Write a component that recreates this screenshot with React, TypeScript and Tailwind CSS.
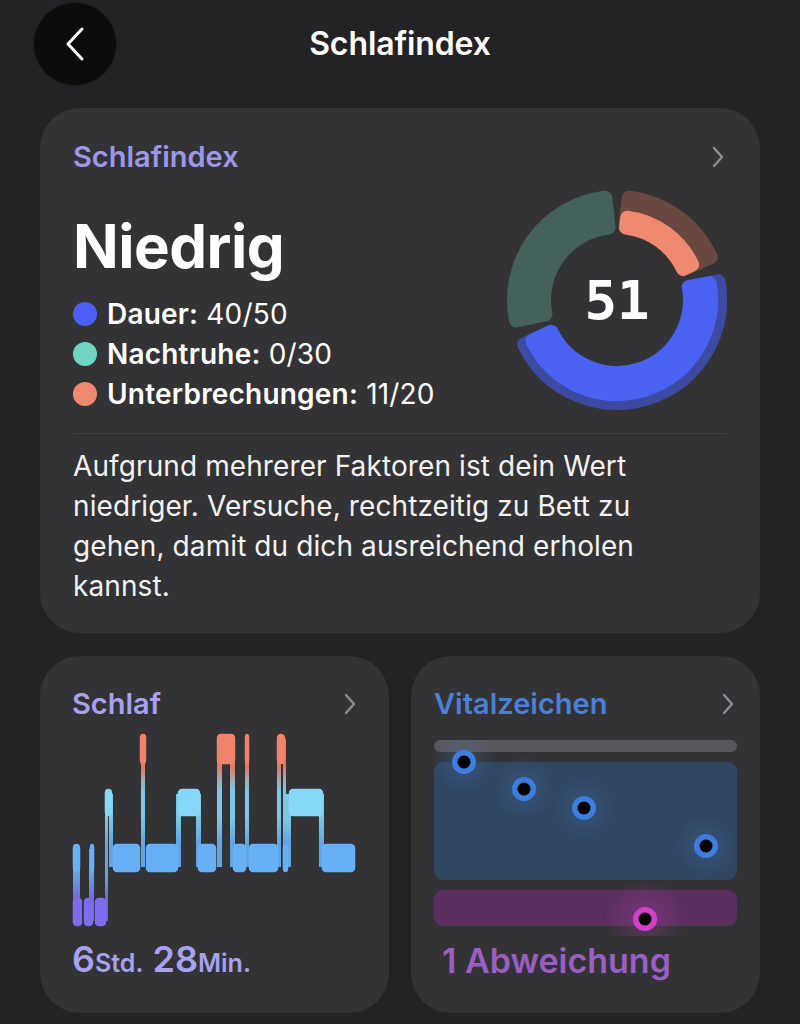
import React from "react";

const CARD = "#333336";

function pt(cx: number, cy: number, r: number, a: number) {
  const t = (a * Math.PI) / 180;
  return [cx + r * Math.sin(t), cy - r * Math.cos(t)];
}

function sector(cx: number, cy: number, r1: number, r2: number, a1: number, a2: number, k: number) {
  const rm = (r1 + r2) / 2;
  const da = ((k / rm) * 180) / Math.PI;
  const b1 = a1 + da;
  const b2 = a2 - da;
  const q1 = r1 + k;
  const q2 = r2 - k;
  const large = b2 - b1 > 180 ? 1 : 0;
  const [x1, y1] = pt(cx, cy, q2, b1);
  const [x2, y2] = pt(cx, cy, q2, b2);
  const [x3, y3] = pt(cx, cy, q1, b2);
  const [x4, y4] = pt(cx, cy, q1, b1);
  return `M${x1} ${y1} A${q2} ${q2} 0 ${large} 1 ${x2} ${y2} L${x3} ${y3} A${q1} ${q1} 0 ${large} 0 ${x4} ${y4} Z`;
}

function Arc({ d, color }: { d: string; color: string }) {
  return <path d={d} fill={color} stroke={color} strokeWidth={14} strokeLinejoin="round" />;
}

function Ring() {
  const c = 112;
  return (
    <svg width="224" height="224" viewBox="0 0 224 224">
      <Arc d={sector(c, c, 66, 110, 254, 358, 7)} color="#45615b" />
      <Arc d={sector(c, c, 66, 110, 2, 70, 7)} color="#6a4740" />
      <Arc d={sector(c, c, 66, 90, 2, 70, 7)} color="#ef8a71" />
      <Arc d={sector(c, c, 66, 110, 75, 249, 7)} color="#3c4aa2" />
      <Arc d={sector(c, c, 66, 101, 75, 249, 7)} color="#4a62f1" />
      <text
        x="112"
        y="131"
        textAnchor="middle"
        fill="#ffffff"
        fontFamily="'DejaVu Sans Mono', monospace"
        fontWeight="700"
        fontSize="54"
      >
        51
      </text>
    </svg>
  );
}

function Chevron({ className = "" }: { className?: string }) {
  return (
    <svg width="14" height="22" viewBox="0 0 14 22" className={className}>
      <path d="M3 2 L11 11 L3 20" fill="none" stroke="#8d8d92" strokeWidth="2.4" strokeLinecap="round" strokeLinejoin="round" />
    </svg>
  );
}

const LEVELS: Record<string, [number, number]> = {
  awake: [0, 32],
  rem: [55, 84],
  core: [110, 140],
  deep: [164, 194],
};

const SEGS: [string, number, number][] = [
  ["core", 0, 9],
  ["deep", 0, 11],
  ["deep", 11, 22],
  ["deep", 22, 35],
  ["core", 17, 23],
  ["rem", 32, 41],
  ["core", 40, 69],
  ["awake", 67, 75],
  ["core", 73, 107],
  ["rem", 105, 129],
  ["core", 125, 145],
  ["awake", 144, 164],
  ["core", 160, 175],
  ["awake", 172, 178],
  ["core", 176, 207],
  ["awake", 204, 214],
  ["core", 210, 217],
  ["rem", 216, 252],
  ["core", 249, 284],
];

const COLS: [number, number, string, string][] = [
  [1, 8, "core", "deep"],
  [17, 22, "core", "deep"],
  [33, 36, "rem", "deep"],
  [37, 41, "rem", "core"],
  [69, 73, "awake", "core"],
  [104, 109, "rem", "core"],
  [124, 129, "rem", "core"],
  [145, 150, "awake", "core"],
  [158, 163, "awake", "core"],
  [173, 177, "awake", "core"],
  [205, 209, "awake", "core"],
  [211, 214, "awake", "core"],
  [214, 219, "rem", "core"],
  [247, 252, "rem", "core"],
];

function Hypnogram() {
  return (
    <svg width="284" height="196" viewBox="0 0 284 196">
      <defs>
        <linearGradient id="hg" gradientUnits="userSpaceOnUse" x1="0" y1="0" x2="0" y2="196">
          <stop offset="0" stopColor="#f1826b" />
          <stop offset="0.17" stopColor="#f1826b" />
          <stop offset="0.29" stopColor="#86d8f8" />
          <stop offset="0.43" stopColor="#86d8f8" />
          <stop offset="0.565" stopColor="#68b0f5" />
          <stop offset="0.72" stopColor="#68b0f5" />
          <stop offset="0.85" stopColor="#7b6cf0" />
          <stop offset="1" stopColor="#7b6cf0" />
        </linearGradient>
      </defs>
      {SEGS.map(([lv, a, b], i) => {
        const [t, bt] = LEVELS[lv];
        return (
          <rect
            key={"s" + i}
            x={a}
            y={t}
            width={b - a}
            height={bt - t}
            rx={5}
            fill="url(#hg)"
            stroke={CARD}
            strokeWidth={1.5}
          />
        );
      })}
      {COLS.map(([a, b, up, lo], i) => {
        const top = LEVELS[up][0] + 6;
        const bot = LEVELS[lo][1] - 6;
        return <rect key={"c" + i} x={a} y={top} width={b - a} height={bot - top} fill="url(#hg)" opacity={0.9} />;
      })}
    </svg>
  );
}

function Dot({ x, y, color }: { x: number; y: number; color: string }) {
  return (
    <g>
      <circle cx={x} cy={y} r={12} fill={color} />
      <circle cx={x} cy={y} r={6.5} fill="#000000" />
    </g>
  );
}

function Vitals() {
  return (
    <svg width="303" height="196" viewBox="0 0 303 196">
      <defs>
        <radialGradient id="gb" cx="0.5" cy="0.5" r="0.5">
          <stop offset="0" stopColor="#4d7fd0" stopOpacity="0.25" />
          <stop offset="1" stopColor="#4d7fd0" stopOpacity="0" />
        </radialGradient>
        <radialGradient id="gp" cx="0.5" cy="0.5" r="0.5">
          <stop offset="0" stopColor="#c040b8" stopOpacity="0.3" />
          <stop offset="1" stopColor="#c040b8" stopOpacity="0" />
        </radialGradient>
      </defs>
      <rect x="0" y="0" width="303" height="12" rx="6" fill="#58585c" />
      <rect x="0" y="22" width="303" height="118" rx="9" fill="#2f4560" />
      <rect x="0" y="150" width="303" height="36" rx="9" fill="#5a2f5f" />
      <circle cx="30" cy="22" r="34" fill="url(#gb)" />
      <circle cx="90" cy="49" r="34" fill="url(#gb)" />
      <circle cx="150" cy="68" r="34" fill="url(#gb)" />
      <circle cx="272" cy="106" r="34" fill="url(#gb)" />
      <circle cx="211" cy="179" r="40" fill="url(#gp)" />
      <Dot x={30} y={22} color="#3d7ddf" />
      <Dot x={90} y={49} color="#3d7ddf" />
      <Dot x={150} y={68} color="#3d7ddf" />
      <Dot x={272} y={106} color="#3d7ddf" />
      <Dot x={211} y={179} color="#d140c6" />
    </svg>
  );
}

function LegendRow({ color, label, value }: { color: string; label: string; value: string }) {
  return (
    <div className="flex items-center gap-[10px] h-[40px]">
      <span className="w-[24px] h-[24px] rounded-full shrink-0" style={{ backgroundColor: color }} />
      <span className="text-[28px] text-white leading-[40px] tracking-[0.2px]">
        <span className="font-semibold">{label}</span> {value}
      </span>
    </div>
  );
}

export default function App() {
  return (
    <div className="w-[800px] h-[1024px] overflow-hidden bg-[#232325] font-['Inter','Noto_Sans',sans-serif] text-white">
      {/* Header */}
      <div className="relative h-[86px] pt-[2px] px-[33px]">
        <div className="w-[84px] h-[84px] rounded-full bg-[#0c0c0d] border border-[#1c1c1e] flex items-center justify-center">
          <svg width="24" height="36" viewBox="0 0 24 36">
            <path d="M19 3 L5 18 L19 33" fill="none" stroke="#ffffff" strokeWidth="3" strokeLinecap="round" strokeLinejoin="round" />
          </svg>
        </div>
        <div className="absolute left-0 right-0 top-[2px] h-[84px] flex items-center justify-center pointer-events-none">
          <span className="text-[32px] font-semibold tracking-[-0.1px]">Schlafindex</span>
        </div>
      </div>

      {/* Main card */}
      <div className="mx-[40px] mt-[22px] h-[525px] rounded-[40px] bg-[#333336] px-[33px] pt-[32px]">
        <div className="flex items-center justify-between h-[34px]">
          <span className="text-[29px] font-semibold text-[#9d97ea]">Schlafindex</span>
          <Chevron className="mr-[2px]" />
        </div>
        <div className="flex justify-between mt-[14px]">
          <div className="pt-[28px]">
            <div className="text-[60px] font-bold leading-none tracking-[-0.5px]">Niedrig</div>
            <div className="mt-[18px]">
              <LegendRow color="#4b60f2" label="Dauer:" value="40/50" />
              <LegendRow color="#6fd6c4" label="Nachtruhe:" value="0/30" />
              <LegendRow color="#ef8a71" label="Unterbrechungen:" value="11/20" />
            </div>
          </div>
          <div className="-mr-[2px]">
            <Ring />
          </div>
        </div>
        <div className="mt-[19px] h-px bg-[#424245]" />
        <p className="mt-[12px] text-[28px] leading-[40px] text-[#f2f2f2] tracking-[0.1px]">
          Aufgrund mehrerer Faktoren ist dein Wert
          <br />
          niedriger. Versuche, rechtzeitig zu Bett zu
          <br />
          gehen, damit du dich ausreichend erholen
          <br />
          kannst.
        </p>
      </div>

      {/* Bottom cards */}
      <div className="grid grid-cols-2 gap-[22px] px-[40px] mt-[23px]">
        <div className="h-[357px] rounded-[40px] bg-[#333336] pl-[32px] pr-[32px] pt-[31px]">
          <div className="flex items-center justify-between h-[34px]">
            <span className="text-[29px] font-semibold text-[#a7a1f2]">Schlaf</span>
            <Chevron />
          </div>
          <div className="mt-[12px]">
            <Hypnogram />
          </div>
          <div className="mt-[8px] font-semibold text-[#a8a2f2] leading-[44px]">
            <span className="text-[36px]">6</span>
            <span className="text-[25px]">Std.</span>
            <span className="text-[36px]"> 28</span>
            <span className="text-[25px]">Min.</span>
          </div>
        </div>
        <div className="h-[357px] rounded-[40px] bg-[#333336] pl-[23px] pr-[25px] pt-[31px]">
          <div className="flex items-center justify-between h-[34px]">
            <span className="text-[29px] font-semibold text-[#4a80d8]">Vitalzeichen</span>
            <Chevron />
          </div>
          <div className="mt-[19px]">
            <Vitals />
          </div>
          <div className="mt-[3px] pl-[8px] text-[34px] font-semibold text-[#9b5ec2] leading-[44px]">1 Abweichung</div>
        </div>
      </div>
    </div>
  );
}
